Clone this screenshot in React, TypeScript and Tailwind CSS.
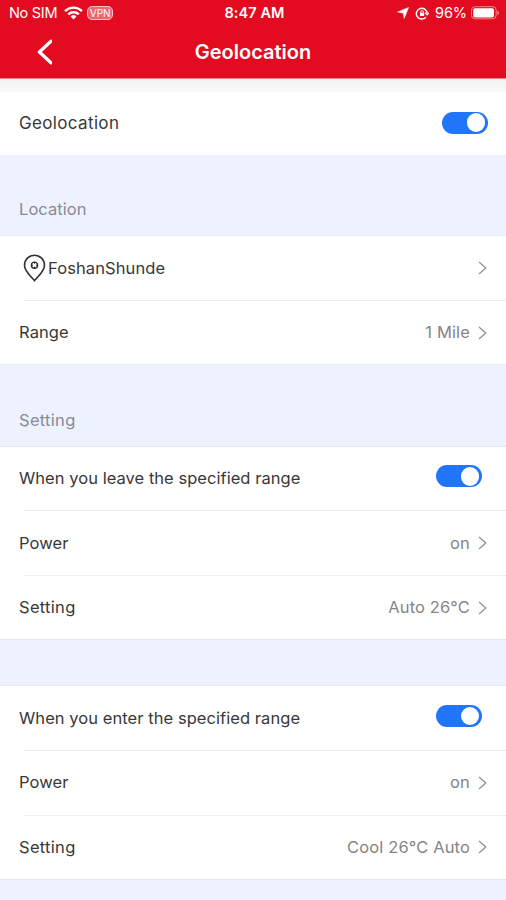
import React, { useState } from 'react';
import clsx from 'clsx';

interface ToggleProps {
  checked: boolean;
  onChange: (value: boolean) => void;
  label: string;
}

function Toggle({ checked, onChange, label }: ToggleProps) {
  return (
    <button
      role="switch"
      aria-checked={checked}
      aria-label={label}
      onClick={() => onChange(!checked)}
      className={clsx(
        'flex h-[22px] w-[46px] items-center rounded-full px-[3px] transition-colors',
        checked ? 'justify-end bg-[#2176f8]' : 'justify-start bg-gray-300'
      )}
    >
      <span className="size-[18.5px] rounded-full bg-white" />
    </button>
  );
}

function Chevron() {
  return (
    <svg width="9" height="14" viewBox="0 0 9 14" fill="none" stroke="#929292" strokeWidth="1.3">
      <path d="M1 1l6.8 6L1 13" />
    </svg>
  );
}

interface RowProps {
  label: string;
  labelClass?: string;
  value?: string;
  icon?: React.ReactNode;
  last?: boolean;
  children?: React.ReactNode;
}

function Row({ label, labelClass = 'tracking-[0.1px]', value, icon, last, children }: RowProps) {
  return (
    <div className="shrink-0 bg-white">
      <div className="flex h-[63.6px] items-center justify-between px-[19px]">
        <div className="flex items-center">
          {icon}
          <span className={clsx('text-[16.5px] text-[#383838]', labelClass)}>{label}</span>
        </div>
        {children ?? (
          <div className="flex items-center gap-[8px]">
            {value && <span className="text-[16.5px] tracking-[0.13px] text-[#858585]">{value}</span>}
            <Chevron />
          </div>
        )}
      </div>
      <div className={clsx('h-px', last ? 'bg-[#e6e9f1]' : 'ml-6 bg-[#ececee]')} />
    </div>
  );
}

function SectionTitle({ label, labelClass }: { label: string; labelClass: string }) {
  return (
    <div className="flex h-[81.2px] shrink-0 items-end border-b border-[#e6e9f3] px-[19px] pb-[14px]">
      <h2 className={clsx('text-[16.5px] leading-6 text-[#888b94]', labelClass)}>{label}</h2>
    </div>
  );
}

function StatusBar() {
  return (
    <div className="grid h-[26px] grid-cols-[1fr_auto_1fr] items-center pr-[6px] pl-[9px]">
      <div className="flex items-center">
        <span className="text-[14.5px] tracking-[-0.3px]">No SIM</span>
        <svg className="ml-[7px]" width="19" height="14" viewBox="0 0 19 14" fill="none" stroke="#fff" strokeWidth="2.4">
          <path d="M1 5.1a12.2 12.2 0 0 1 17 0" />
          <path d="M4.2 8.4a7.6 7.6 0 0 1 10.6 0" />
          <path d="M9.5 13.4L6.6 10.5a4.2 4.2 0 0 1 5.8 0z" fill="#fff" stroke="none" />
        </svg>
        <span className="ml-[4px] flex h-[14px] w-[26px] items-center justify-center rounded-[5px] border border-[#ffc5c9] bg-[#ec6570] text-[10px] leading-none">
          VPN
        </span>
      </div>
      <span className="text-[14.5px] font-semibold tracking-[0.1px]">8:47 AM</span>
      <div className="flex items-center justify-end">
        <svg width="12" height="12" viewBox="0 0 12 12" fill="#fff" stroke="#fff" strokeWidth=".5">
          <path d="M11.6.4L7.2 11.4 6.3 6.2.5 5z" />
        </svg>
        <svg className="ml-[6px]" width="14" height="13" viewBox="0 0 14 13" fill="none" stroke="#fff" strokeWidth="1.5">
          <path d="M10.8 10.3A5.4 5.4 0 1 1 12.2 6.5" />
          <path d="M10.2 5.8l2 2 1.7-2" strokeWidth="1.3" />
          <rect x="5" y="5.8" width="4.2" height="3.2" fill="#fff" stroke="none" />
          <path d="M5.8 6V4.9a1.3 1.3 0 0 1 2.6 0V6" strokeWidth="1" />
        </svg>
        <span className="ml-[6px] text-[14.5px] tracking-[-0.1px]">96%</span>
        <svg className="ml-[4px]" width="29" height="14" viewBox="0 0 30 14">
          <rect x=".5" y=".5" width="25.5" height="12.5" rx="3.5" fill="none" stroke="#f58b92" />
          <rect x="2.3" y="2" width="21.5" height="9.7" rx="1.8" fill="#fff" />
          <path d="M27.3 4.6c2.2.8 2.2 3.6 0 4.4z" fill="#f58b92" />
        </svg>
      </div>
    </div>
  );
}

function PinIcon() {
  return (
    <svg className="ml-[4px] mr-[2px]" width="23" height="28" viewBox="0 0 23 28" fill="none" stroke="#303030" strokeWidth="1.6">
      <path d="M11.5 26.6C8 22.2 1.5 17.4 1.5 11.2a10 10 0 0 1 20 0c0 6.2-6.5 11-10 15.4z" />
      <circle cx="11.5" cy="11.2" r="3.1" strokeWidth="1.4" />
      <path d="M11.5 8v1.8M11.5 12.6v1.8M8.3 11.2h1.8M12.9 11.2h1.8" strokeWidth="1" />
    </svg>
  );
}

export default function App() {
  const [enabled, setEnabled] = useState(true);
  const [onLeave, setOnLeave] = useState(true);
  const [onEnter, setOnEnter] = useState(true);

  return (
    <div className="flex h-[900px] w-full flex-col overflow-hidden bg-[#edf2fe] font-['Inter',sans-serif]">
      {/* Header */}
      <header className="h-[79px] shrink-0 border-b border-[#e98583] bg-[#e30b20] text-white">
        <StatusBar />
        <div className="grid h-[52px] grid-cols-[1fr_auto_1fr] items-center">
          <button aria-label="Back" className="mb-[1px] ml-[36px] w-4">
            <svg width="16" height="26" viewBox="0 0 16 26" fill="none" stroke="#fff" strokeWidth="3.3">
              <path d="M15 2.2L3.4 13 15 23.8" strokeLinecap="round" strokeLinejoin="round" />
            </svg>
          </button>
          <h1 className="text-[20px] font-semibold">Geolocation</h1>
        </div>
      </header>
      <div className="h-[13px] shrink-0 bg-gradient-to-b from-[#f2f2f3] to-[#f9f9f9]" />

      <div className="flex h-[63px] shrink-0 items-center justify-between bg-white pr-[18px] pl-[19px]">
        <span className="text-[17px] tracking-[0.35px] text-[#383838]">Geolocation</span>
        <div className="mb-[2px]">
          <Toggle checked={enabled} onChange={setEnabled} label="Geolocation" />
        </div>
      </div>

      {/* Location */}
      <SectionTitle label="Location" labelClass="tracking-[0.05px]" />
      <Row label="FoshanShunde" icon={<PinIcon />} />
      <Row label="Range" value="1 Mile" last />

      {/* Leaving the range */}
      <SectionTitle label="Setting" labelClass="tracking-[0.3px]" />
      <Row label="When you leave the specified range" labelClass="tracking-[0.04px]">
        <div className="mr-[5px] mb-[4px]">
          <Toggle checked={onLeave} onChange={setOnLeave} label="Leave range" />
        </div>
      </Row>
      <Row label="Power" value="on" />
      <Row label="Setting" labelClass="tracking-[0.3px]" value="Auto 26°C" last />

      {/* Entering the range */}
      <div className="h-[46px] shrink-0 border-b border-[#e6e9f3]" />
      <Row label="When you enter the specified range" labelClass="tracking-[0.06px]">
        <div className="mr-[5px] mb-[4px]">
          <Toggle checked={onEnter} onChange={setOnEnter} label="Enter range" />
        </div>
      </Row>
      <Row label="Power" value="on" />
      <Row label="Setting" labelClass="tracking-[0.3px]" value="Cool 26°C Auto" last />
    </div>
  );
}
